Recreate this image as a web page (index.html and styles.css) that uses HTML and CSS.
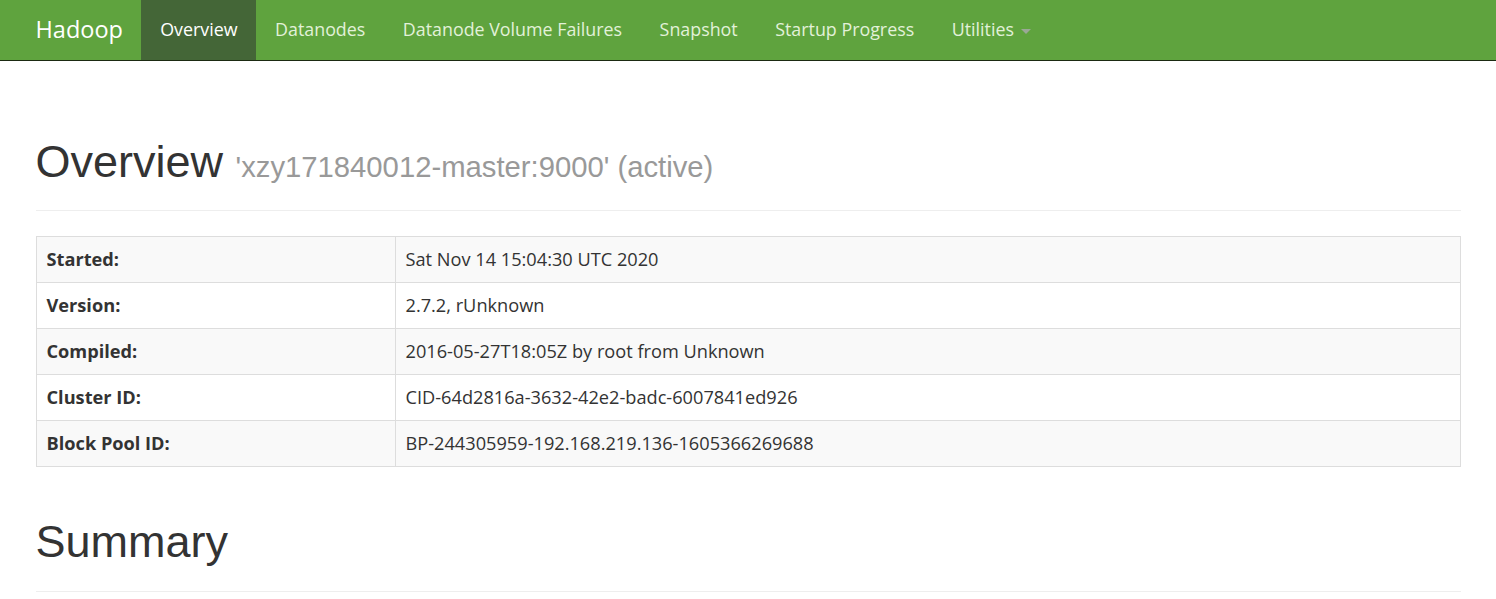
FILE: index.html
```html
<!DOCTYPE html>
<html lang="en">
<head>
<meta charset="utf-8">
<title>Namenode information</title>
<link rel="stylesheet" href="styles.css">
</head>
<body>
<header class="navbar">
  <div class="container nav-inner">
    <a class="brand" href="#">Hadoop</a>
    <ul class="nav">
      <li class="active"><a href="#">Overview</a></li>
      <li><a href="#">Datanodes</a></li>
      <li><a href="#">Datanode Volume Failures</a></li>
      <li><a href="#">Snapshot</a></li>
      <li><a href="#">Startup Progress</a></li>
      <li><a href="#">Utilities <span class="caret"></span></a></li>
    </ul>
  </div>
</header>
<main class="container">
  <div class="page-header first">
    <h1>Overview <small>'xzy171840012-master:9000' (active)</small></h1>
  </div>
  <table class="info">
    <tr><th>Started:</th><td>Sat Nov 14 15:04:30 UTC 2020</td></tr>
    <tr><th>Version:</th><td>2.7.2, rUnknown</td></tr>
    <tr><th>Compiled:</th><td>2016-05-27T18:05Z by root from Unknown</td></tr>
    <tr><th>Cluster ID:</th><td>CID-64d2816a-3632-42e2-badc-6007841ed926</td></tr>
    <tr><th>Block Pool ID:</th><td>BP-244305959-192.168.219.136-1605366269688</td></tr>
  </table>
  <div class="page-header">
    <h1>Summary</h1>
  </div>
</main>
</body>
</html>
```
FILE: styles.css
```css
html, body {
  margin: 0;
  padding: 0;
}
body {
  font-family: "Open Sans", "Noto Sans", sans-serif;
  font-size: 18.2px;
  line-height: 1.42857;
  color: #333;
  background: #fff;
}
.container {
  width: 1462.5px;
  margin: 0 auto;
  padding: 0 18.75px;
  box-sizing: border-box;
}
.navbar {
  background: #5fa33e;
  height: 60px;
  border-bottom: 1px solid #1b2a12;
}
.nav-inner {
  display: flex;
  align-items: stretch;
  height: 60px;
}
.brand {
  display: flex;
  align-items: center;
  margin-left: -18.75px;
  padding: 0 18.5px 0 18.75px;
  font-size: 23.5px;
  color: #fff;
  text-decoration: none;
}
.nav {
  display: flex;
  list-style: none;
  margin: 0;
  padding: 0;
}
.nav li {
  display: flex;
}
.nav a {
  display: flex;
  align-items: center;
  padding: 0 18.75px;
  font-size: 17.85px;
  color: #e2f1d9;
  text-decoration: none;
}
.nav li.active a {
  background: #446637;
  color: #fff;
}
.caret {
  display: inline-block;
  width: 0;
  height: 0;
  margin-left: 7px;
  margin-top: 3px;
  border-top: 5px solid #9aa896;
  border-left: 5px solid transparent;
  border-right: 5px solid transparent;
}
.page-header {
  margin: 50px 0 25px;
  padding-bottom: 11.25px;
  border-bottom: 1px solid #eee;
}
.page-header.first {
  margin-top: 76px;
}
h1 {
  font-family: "Liberation Sans", Arial, sans-serif;
  font-weight: 500;
  font-size: 45px;
  line-height: 1.1;
  margin: 0 0 12.5px;
  color: #333;
}
h1 small {
  font-size: 65%;
  color: #999;
  font-weight: normal;
}
.info {
  width: 100%;
  border-collapse: collapse;
  border: 1px solid #ddd;
  margin-bottom: 25px;
}
.info th,
.info td {
  border: 1px solid #ddd;
  padding: 10px;
  text-align: left;
  vertical-align: top;
  line-height: 25px;
}
.info th {
  width: 338px;
  font-weight: bold;
}
.info tr:nth-child(odd) {
  background: #f9f9f9;
}
```
